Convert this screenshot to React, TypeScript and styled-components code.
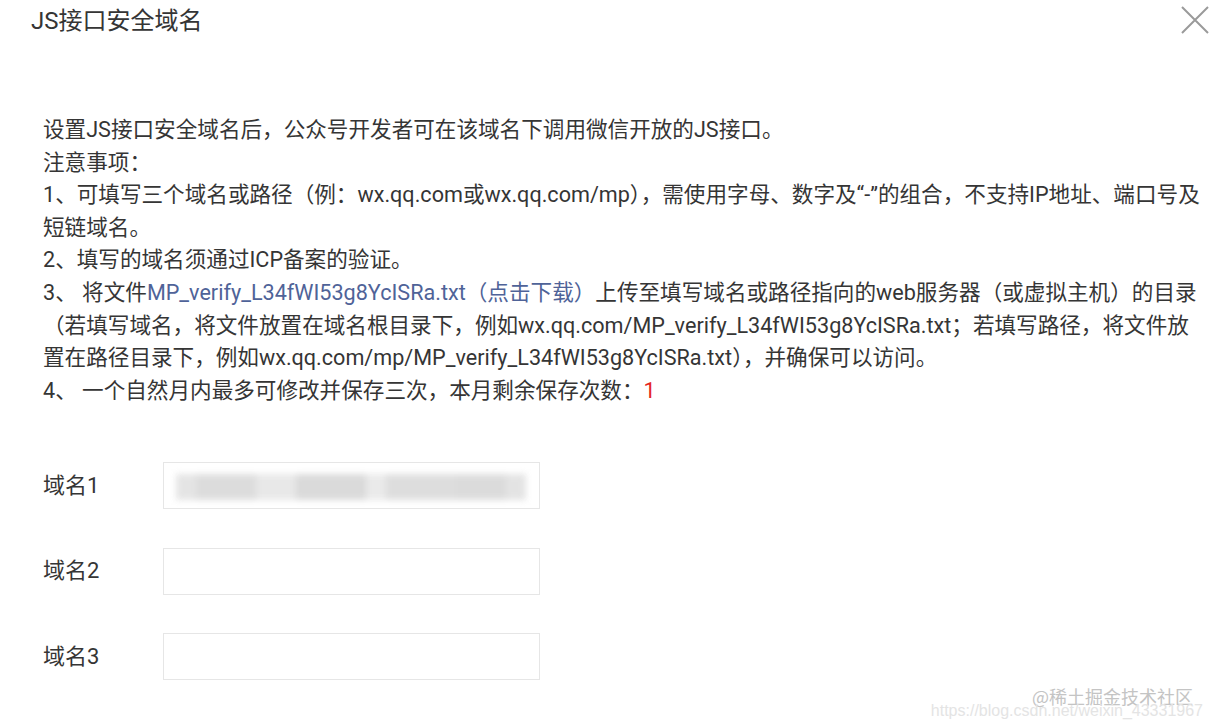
import React from "react";
import styled, { createGlobalStyle } from "styled-components";

const Global = createGlobalStyle`
  html, body { margin: 0; padding: 0; background: #fff; }
  body { font-family: Roboto, "Noto Sans CJK SC", sans-serif; color: #353535; }
  * { box-sizing: border-box; }
`;

const Dialog = styled.div`
  position: relative;
  width: 1213px;
  height: 725px;
  overflow: hidden;
  background: #fff;
`;

const Header = styled.div`
  display: flex;
  justify-content: space-between;
  align-items: flex-start;
  padding: 3px 2px 0 31px;
  height: 114px;
`;

const Title = styled.h1`
  margin: 0;
  font-size: 24px;
  font-weight: 400;
  line-height: 36px;
  color: #353535;
  font-family: Roboto, "Noto Sans CJK SC", sans-serif;
`;

const CloseButton = styled.button`
  border: 0;
  background: transparent;
  padding: 0;
  width: 32px;
  height: 34px;
  cursor: pointer;
  display: flex;
  align-items: center;
  justify-content: center;
`;

const Body = styled.div`
  padding: 0 0 0 43px;
`;

const Notes = styled.div`
  width: 1158px;
  font-size: 21.6px;
  line-height: 32.6px;
  color: #353535;
`;

const Line = styled.div``;

const Link = styled.a`
  color: #4f6398;
  text-decoration: none;
`;

const Count = styled.span`
  color: #e5261f;
`;

const Form = styled.div`
  margin-top: 55px;
  display: flex;
  flex-direction: column;
  gap: 38.5px;
`;

const Row = styled.div`
  display: flex;
  align-items: center;
`;

const Label = styled.label`
  width: 120px;
  font-size: 22px;
  color: #353535;
  padding-bottom: 6px;
`;

const InputBox = styled.div`
  position: relative;
  width: 377px;
  height: 47px;
  border: 1.5px solid #e6e6e6;
  background: #fff;
  overflow: hidden;
`;

const Blur = styled.div`
  position: absolute;
  left: 12px;
  top: 11px;
  width: 350px;
  height: 26px;
  display: flex;
  filter: blur(3px);
  opacity: 0.9;
`;

const BlurBlock = styled.div<{ $w: number; $c: string }>`
  width: ${(p) => p.$w}px;
  height: 100%;
  background: ${(p) => p.$c};
`;

const Watermark = styled.div`
  position: absolute;
  right: 10px;
  bottom: 6px;
  text-align: right;
  pointer-events: none;
`;

const WmTitle = styled.div`
  font-size: 18px;
  line-height: 22px;
  color: #c4c4c4;
  padding-right: 10px;
  font-family: "Noto Sans CJK SC", sans-serif;
`;

const WmUrl = styled.div`
  font-size: 16px;
  line-height: 16px;
  color: #e4e4e4;
  font-family: "Liberation Sans", Arial, sans-serif;
  margin-top: -4px;
`;

const blocks: [number, string][] = [
  [20, "#e2e2e2"],
  [60, "#d9d9d9"],
  [40, "#e6e6e6"],
  [70, "#d6d6d6"],
  [20, "#e8e8e8"],
  [70, "#dadada"],
  [50, "#d8d8d8"],
  [20, "#e1e1e1"],
];

export default function App() {
  const file = "MP_verify_L34fWI53g8YcISRa.txt";
  return (
    <Dialog>
      <Global />
      <Header>
        <Title>JS接口安全域名</Title>
        <CloseButton aria-label="关闭">
          <svg width="28" height="28" viewBox="0 0 28 28">
            <path d="M1 1 L27 27 M27 1 L1 27" stroke="#9a9a9a" strokeWidth="2" fill="none" />
          </svg>
        </CloseButton>
      </Header>
      <Body>
        <Notes>
          <Line>设置JS接口安全域名后，公众号开发者可在该域名下调用微信开放的JS接口。</Line>
          <Line>注意事项：</Line>
          <Line>
            1、可填写三个域名或路径（例：wx.qq.com或wx.qq.com/mp），需使用字母、数字及“-”的组合，不支持IP地址、端口号及短链域名。
          </Line>
          <Line>2、填写的域名须通过ICP备案的验证。</Line>
          <Line>
            3、 将文件<Link href="#">{file}（点击下载）</Link>
            上传至填写域名或路径指向的web服务器（或虚拟主机）的目录（若填写域名，将文件放置在域名根目录下，例如wx.qq.com/{file}；若填写路径，将文件放置在路径目录下，例如wx.qq.com/mp/{file}），并确保可以访问。
          </Line>
          <Line>
            4、 一个自然月内最多可修改并保存三次，本月剩余保存次数：<Count>1</Count>
          </Line>
        </Notes>
        <Form>
          {[1, 2, 3].map((n) => (
            <Row key={n}>
              <Label>域名{n}</Label>
              <InputBox>
                {n === 1 && (
                  <Blur>
                    {blocks.map(([w, c], i) => (
                      <BlurBlock key={i} $w={w} $c={c} />
                    ))}
                  </Blur>
                )}
              </InputBox>
            </Row>
          ))}
        </Form>
      </Body>
      <Watermark>
        <WmTitle>@稀土掘金技术社区</WmTitle>
        <WmUrl>https://blog.csdn.net/weixin_43331967</WmUrl>
      </Watermark>
    </Dialog>
  );
}
